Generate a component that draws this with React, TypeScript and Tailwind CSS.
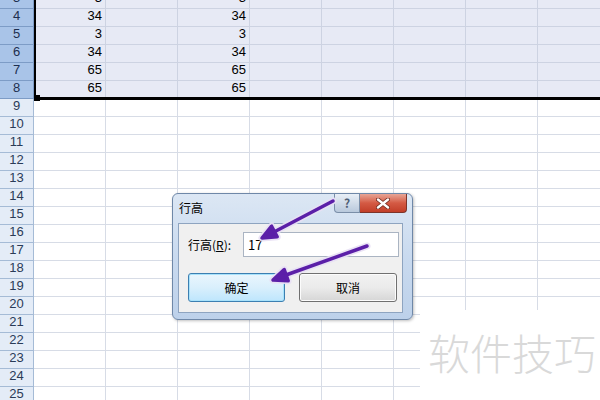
import React from 'react';

const rows = Array.from({ length: 23 }, (_, i) => i + 3);
const values: Record<number, string> = { 3: '3', 4: '34', 5: '3', 6: '34', 7: '65', 8: '65' };
const cols = [0, 1, 2, 3, 4, 5, 6, 7];

const Sheet: React.FC = () => (
    <div className="-mt-[9px] flex flex-col font-['Liberation_Sans',sans-serif] text-[13px] text-black">
        {rows.map((r) => {
            const sel = r <= 8;
            return (
                <div key={r} className="flex h-[18px]">
                    <div
                        className={
                            sel
                                ? 'w-[34px] shrink-0 border-r border-b border-[#7d9cc6] bg-[#a9c4e8] flex items-end justify-center pb-[1px] text-[#1d2f4f]'
                                : 'w-[34px] shrink-0 border-r border-b border-[#a5bbd6] bg-[#e4ecf7] flex items-end justify-center pb-[1px] text-[#2a3b57]'
                        }
                    >
                        {r}
                    </div>
                    {cols.map((c) => (
                        <div
                            key={c}
                            className={
                                sel
                                    ? 'w-[72px] shrink-0 border-r border-b border-[#cdd3e2] bg-[#e7eaf5] flex items-end justify-end pr-[3px] pb-[1px]'
                                    : 'w-[72px] shrink-0 border-r border-b border-[#d7dce6] bg-white flex items-end justify-end pr-[3px] pb-[1px]'
                            }
                        >
                            {sel && (c === 0 || c === 2) ? values[r] : ''}
                        </div>
                    ))}
                </div>
            );
        })}
    </div>
);

const Dialog: React.FC = () => (
    <div className="absolute left-[172px] top-[193px] w-[241px] h-[127px] rounded-[6px] border border-[#6f88a8] bg-gradient-to-b from-[#dce7f4] via-[#c9daef] to-[#bdd1ea] shadow-[1px_1px_3px_rgba(0,0,0,0.25)] font-['Noto_Sans_CJK_SC',sans-serif] text-[12px] text-black">
        <div className="flex h-[29px] items-start">
            <div className="pl-[6px] pt-[6px] leading-[16px]">行高</div>
            <div className="ml-auto mr-[5px] flex">
                <div className="w-[26px] h-[19px] rounded-bl-[4px] border border-t-0 border-[#7a8ea8] bg-gradient-to-b from-[#e9eff6] to-[#b9c9dc] flex items-center justify-center text-[12px] font-bold text-[#4f5f75]">
                    ?
                </div>
                <div className="w-[47px] h-[19px] rounded-br-[4px] border border-l-0 border-t-0 border-[#7d342a] bg-gradient-to-b from-[#e7a596] via-[#d45a44] to-[#c23e28] flex items-center justify-center">
                    <svg width="14" height="11" viewBox="0 0 14 11">
                        <path d="M2 1.5 L12 9.5 M12 1.5 L2 9.5" stroke="#6d2a20" strokeWidth="4" strokeLinecap="round" />
                        <path d="M2 1.5 L12 9.5 M12 1.5 L2 9.5" stroke="#ffffff" strokeWidth="2.4" strokeLinecap="round" />
                    </svg>
                </div>
            </div>
        </div>
        <div className="ml-[5px] mr-[9px] h-[90px] border border-[#8ea4c0] bg-[#f0f0f0] pl-[9px] pt-[8px]">
            <div className="flex items-center h-[25px]">
                <div className="w-[55px]">
                    行高(<span className="underline">R</span>):
                </div>
                <div className="w-[156px] h-[25px] border border-[#aab4c2] bg-white pl-[4px] flex items-center text-[13px]">
                    17
                </div>
            </div>
            <div className="mt-[16px] flex gap-[14px]">
                <div className="w-[97px] h-[29px] rounded-[3px] border border-[#3c7fb1] bg-gradient-to-b from-[#eaf6fd] via-[#d9effc] to-[#bee6fd] shadow-[inset_0_0_0_1px_#a8e2fb] flex items-center justify-center">
                    确定
                </div>
                <div className="w-[98px] h-[29px] rounded-[3px] border border-[#707070] bg-gradient-to-b from-[#f2f2f2] via-[#ebebeb] to-[#d6d6d6] shadow-[inset_0_0_0_1px_#fcfcfc] flex items-center justify-center">
                    取消
                </div>
            </div>
        </div>
    </div>
);

const Arrows: React.FC = () => (
    <svg className="absolute left-0 top-0 pointer-events-none" width="600" height="400" viewBox="0 0 600 400">
        <g stroke="#e8e0f5" strokeWidth="7" strokeLinecap="round" strokeLinejoin="round" fill="#e8e0f5" opacity="0.9">
            <line x1="333" y1="201" x2="274" y2="232" />
            <polygon points="262,238 277.2,236.8 271.6,226.2" />
            <line x1="367" y1="246" x2="286" y2="275" />
            <polygon points="273,280 288.2,280.8 284.2,269.6" />
        </g>
        <g stroke="#5b1fa8" strokeWidth="3.5" strokeLinecap="round" strokeLinejoin="round" fill="#5b1fa8">
            <line x1="333" y1="201" x2="274" y2="232" />
            <polygon points="262,238 277.2,236.8 271.6,226.2" />
            <line x1="367" y1="246" x2="286" y2="275" />
            <polygon points="273,280 288.2,280.8 284.2,269.6" />
        </g>
    </svg>
);

const App: React.FC = () => {
    return (
        <div className="relative w-[600px] h-[400px] overflow-hidden bg-white">
            <Sheet />
            {/* selection outline + fill handle */}
            <div className="absolute left-[34px] top-0 w-[566px] h-[100px] border-l-2 border-b-[3px] border-black" />
            <div className="absolute left-[34px] top-[95px] w-[6px] h-[6px] bg-black" />
            <Dialog />
            <Arrows />
            <div className="absolute left-[420px] top-[310px] w-[180px] h-[90px] bg-white">
                <div className="pl-[8px] pt-[18px] text-[42px] leading-[48px] tracking-[0px] text-[#d9d9d9] font-['Noto_Sans_CJK_SC',sans-serif] font-light">
                    软件技巧
                </div>
            </div>
        </div>
    );
};

export default App;
